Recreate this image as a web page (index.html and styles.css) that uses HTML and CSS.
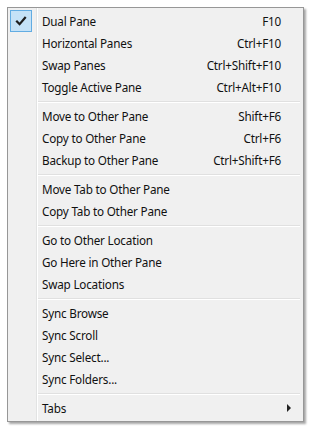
FILE: index.html
```html
<!DOCTYPE html>
<html>

<head>
    <meta charset="utf-8">
    <meta name="viewport" content="width=device-width">
    <title>Pane Menu</title>
    <link rel="stylesheet" href="styles.css">
</head>

<body>
    <div class="menu">
        <div class="item">
            <span class="check checked">
                <svg width="22" height="22" viewBox="0 0 22 22"><path d="M7 11.5 L9.6 14.2 L15 7.8" fill="none" stroke="#1e1e1e" stroke-width="2.2" stroke-linecap="square"/></svg>
            </span>
            <span class="label">Dual Pane</span>
            <span class="key">F10</span>
        </div>
        <div class="item"><span class="check"></span><span class="label">Horizontal Panes</span><span class="key">Ctrl+F10</span></div>
        <div class="item"><span class="check"></span><span class="label">Swap Panes</span><span class="key">Ctrl+Shift+F10</span></div>
        <div class="item"><span class="check"></span><span class="label">Toggle Active Pane</span><span class="key">Ctrl+Alt+F10</span></div>
        <div class="sep"></div>
        <div class="item"><span class="check"></span><span class="label">Move to Other Pane</span><span class="key">Shift+F6</span></div>
        <div class="item"><span class="check"></span><span class="label">Copy to Other Pane</span><span class="key">Ctrl+F6</span></div>
        <div class="item"><span class="check"></span><span class="label">Backup to Other Pane</span><span class="key">Ctrl+Shift+F6</span></div>
        <div class="sep"></div>
        <div class="item"><span class="check"></span><span class="label">Move Tab to Other Pane</span></div>
        <div class="item"><span class="check"></span><span class="label">Copy Tab to Other Pane</span></div>
        <div class="sep"></div>
        <div class="item"><span class="check"></span><span class="label">Go to Other Location</span></div>
        <div class="item"><span class="check"></span><span class="label">Go Here in Other Pane</span></div>
        <div class="item"><span class="check"></span><span class="label">Swap Locations</span></div>
        <div class="sep"></div>
        <div class="item"><span class="check"></span><span class="label">Sync Browse</span></div>
        <div class="item"><span class="check"></span><span class="label">Sync Scroll</span></div>
        <div class="item"><span class="check"></span><span class="label">Sync Select...</span></div>
        <div class="item"><span class="check"></span><span class="label">Sync Folders...</span></div>
        <div class="sep"></div>
        <div class="item">
            <span class="check"></span>
            <span class="label">Tabs</span>
            <span class="arrow"></span>
        </div>
    </div>
</body>

</html>
```

FILE: styles.css
```css
* {
    margin: 0;
    padding: 0;
    box-sizing: border-box;
}

body {
    background: #fff;
    padding: 7px;
    font-family: "Noto Sans", "Open Sans", sans-serif;
    font-size: 11.7px;
    letter-spacing: -0.2px;
    color: #111;
}

.menu {
    width: 297px;
    height: 415px;
    padding: 2px;
    border: 1px solid #979797;
    background:
        linear-gradient(to right, transparent 28px, #e2e3e3 28px, #e2e3e3 29px, #fff 29px, #fff 30px, transparent 30px),
        #f0f0f0;
    box-shadow: 2px 2px 2px rgba(0, 0, 0, .35);
}

.item {
    display: flex;
    align-items: center;
    height: 22px;
    padding-right: 20px;
}

.check {
    width: 22px;
    height: 22px;
    margin-right: 10px;
    flex: none;
}

.check.checked {
    background: #c5e2f7;
    border: 1px solid #62ace2;
}

.check.checked svg {
    display: block;
    margin: -1px;
}

.label {
    flex: 1;
    white-space: nowrap;
}

.key {
    white-space: nowrap;
}

.arrow {
    width: 0;
    height: 0;
    margin-right: -10px;
    border-left: 4px solid #222;
    border-top: 4px solid transparent;
    border-bottom: 4px solid transparent;
}

.sep {
    height: 7px;
    margin: 0 1px 0 28px;
    padding-top: 3px;
}

.sep::before {
    content: "";
    display: block;
    height: 1px;
    background: #e0e0e0;
    border-bottom: 1px solid #fff;
    box-sizing: content-box;
}
```
